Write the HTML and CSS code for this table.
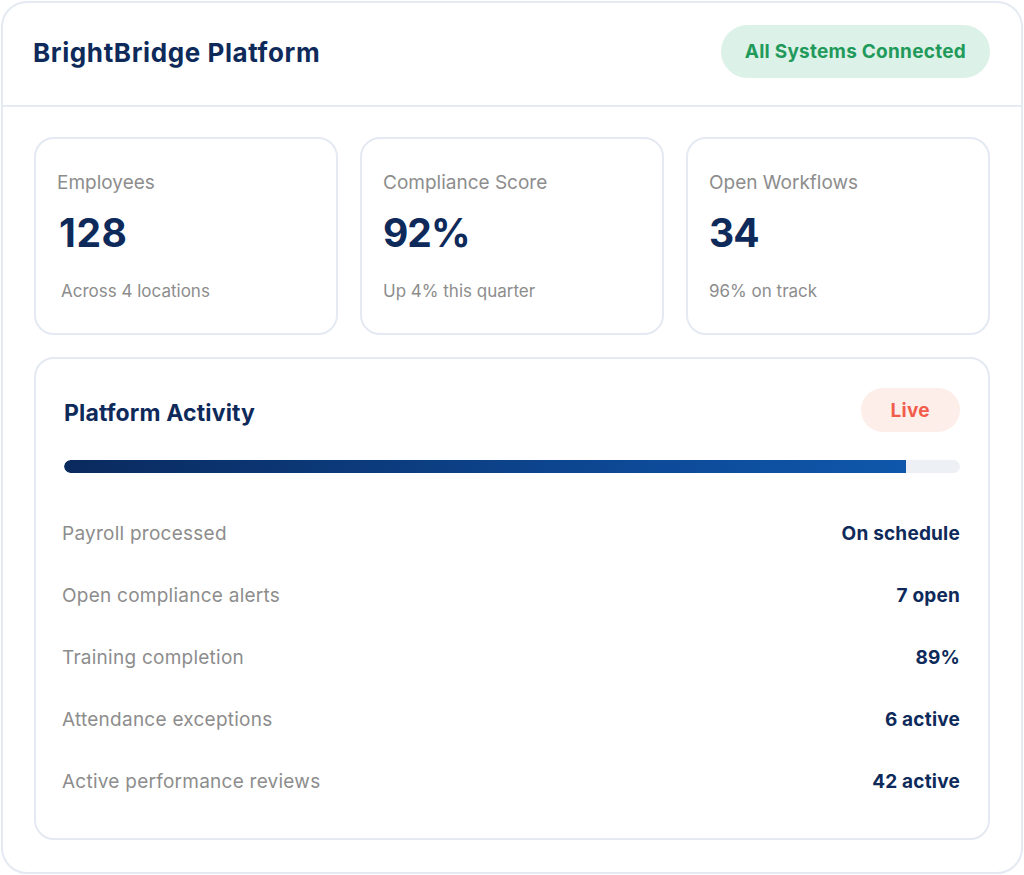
FILE: index.html
```html
<!DOCTYPE html>
<html lang="en">
<head>
<meta charset="utf-8">
<title>BrightBridge Platform</title>
<link rel="stylesheet" href="styles.css">
</head>
<body>
<div class="panel">
  <header class="panel-head">
    <h1 class="brand">BrightBridge Platform</h1>
    <span class="status-pill">All Systems Connected</span>
  </header>
  <main class="panel-body">
    <section class="stats">
      <div class="stat">
        <div class="stat-label">Employees</div>
        <div class="stat-value stat-value-indent">128</div>
        <div class="stat-sub stat-sub-indent">Across 4 locations</div>
      </div>
      <div class="stat">
        <div class="stat-label">Compliance Score</div>
        <div class="stat-value">92%</div>
        <div class="stat-sub">Up 4% this quarter</div>
      </div>
      <div class="stat">
        <div class="stat-label">Open Workflows</div>
        <div class="stat-value">34</div>
        <div class="stat-sub">96% on track</div>
      </div>
    </section>
    <section class="activity">
      <div class="activity-head">
        <h2 class="activity-title">Platform Activity</h2>
        <span class="live-pill">Live</span>
      </div>
      <div class="bar"><div class="bar-fill" style="width: 94%"></div></div>
      <ul class="rows">
        <li class="row"><span class="row-label">Payroll processed</span><span class="row-value">On schedule</span></li>
        <li class="row"><span class="row-label">Open compliance alerts</span><span class="row-value">7 open</span></li>
        <li class="row"><span class="row-label">Training completion</span><span class="row-value">89%</span></li>
        <li class="row"><span class="row-label">Attendance exceptions</span><span class="row-value">6 active</span></li>
        <li class="row"><span class="row-label">Active performance reviews</span><span class="row-value">42 active</span></li>
      </ul>
    </section>
  </main>
</div>
</body>
</html>
```

FILE: styles.css
```css
* { box-sizing: border-box; }

html, body {
  margin: 0;
  padding: 0;
  background: #ffffff;
}

body {
  font-family: "Inter", "Noto Sans", "Liberation Sans", sans-serif;
  color: #0e2a5a;
  padding: 1px 0 0 1px;
}

.panel {
  width: 1022px;
  height: 873px;
  border: 2px solid #e4e9f2;
  border-radius: 26px;
  background: #ffffff;
  display: flex;
  flex-direction: column;
}

.panel-head {
  height: 104px;
  padding: 0 31px 4px 30px;
  display: flex;
  align-items: center;
  justify-content: space-between;
  border-bottom: 2px solid #e6eaf2;
}

.brand {
  margin: 0;
  font-size: 26px;
  font-weight: 700;
  letter-spacing: 0.6px;
  color: #0e2a5a;
}

.status-pill {
  height: 53px;
  padding: 0 24px;
  border-radius: 27px;
  background: #dcf1e7;
  color: #1f9a5a;
  font-size: 19px;
  font-weight: 700;
  letter-spacing: 0.25px;
  display: flex;
  align-items: center;
  margin-top: -1px;
}

.panel-body {
  padding: 30px 31px 31px 31px;
  display: flex;
  flex-direction: column;
  gap: 22px;
}

.stats {
  display: grid;
  grid-template-columns: repeat(3, 1fr);
  gap: 22px;
}

.stat {
  height: 198px;
  border: 2px solid #e4e9f2;
  border-radius: 20px;
  padding: 32px 21px 30px 21px;
  display: flex;
  flex-direction: column;
}

.stat-label {
  font-size: 19px;
  line-height: 24px;
  color: #8d8d8d;
}

.stat-value {
  margin-top: 14px;
  font-size: 39px;
  line-height: 48px;
  font-weight: 700;
  letter-spacing: -1px;
  color: #0e2a5a;
}

.stat-value-indent { padding-left: 2px; letter-spacing: 0.6px; }

.stat-sub {
  margin-top: 23px;
  font-size: 17px;
  line-height: 22px;
  color: #8d8d8d;
}

.stat-sub-indent { padding-left: 4px; }

.activity {
  height: 483px;
  border: 2px solid #e4e9f2;
  border-radius: 20px;
  padding: 29px 28px 26px 26px;
}

.activity-head {
  height: 44px;
  display: flex;
  align-items: center;
  justify-content: space-between;
  padding-left: 2px;
}

.activity-title {
  margin: 6px 0 0 0;
  font-size: 23px;
  font-weight: 700;
  letter-spacing: 0.15px;
  color: #0e2a5a;
}

.live-pill {
  height: 44px;
  padding: 0 30px;
  border-radius: 22px;
  background: #fdeeea;
  color: #f25c4a;
  font-size: 19px;
  font-weight: 700;
  letter-spacing: 0.3px;
  display: flex;
  align-items: center;
}

.bar {
  margin-top: 28px;
  margin-left: 2px;
  height: 13px;
  border-radius: 7px;
  background: #edf1f6;
  overflow: hidden;
}

.bar-fill {
  height: 100%;
  border-radius: 7px 0 0 7px;
  background: linear-gradient(90deg, #0a2a5e 0%, #0d4a98 70%, #0f57ab 100%);
}

.rows {
  list-style: none;
  margin: 29px 0 0 0;
  padding: 0;
}

.row {
  height: 62px;
  display: flex;
  align-items: center;
  justify-content: space-between;
}

.row-label {
  font-size: 19px;
  letter-spacing: 0.25px;
  color: #8d8d8d;
}

.row-value {
  font-size: 19px;
  font-weight: 700;
  letter-spacing: 0.2px;
  color: #0e2a5a;
}
```
